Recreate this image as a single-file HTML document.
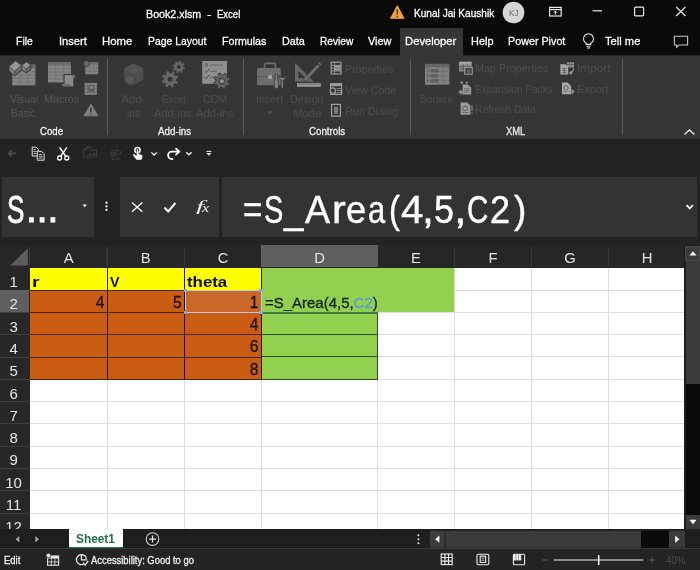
<!DOCTYPE html>
<html><head><meta charset="utf-8"><title>Book2.xlsm - Excel</title>
<style>
*{box-sizing:border-box;margin:0;padding:0}
html,body{width:700px;height:570px;overflow:hidden;background:#232323;font-family:"Liberation Sans",sans-serif}
#app{position:relative;filter:blur(0.3px);width:700px;height:570px;overflow:hidden;background:#232323;color:#fff}
.a{position:absolute}
.t{position:absolute;white-space:nowrap;line-height:1;z-index:3}
svg{position:absolute;overflow:visible}
</style></head><body>
<div id="app">
<!-- title bar -->
<div class="a" style="left:0;top:0;width:700px;height:55px;background:#0a0a0a"></div>
<div class="a" style="left:399.5px;top:28px;width:63.5px;height:27px;background:#363636"></div>
<!-- ribbon -->
<div class="a" style="left:0;top:55px;width:700px;height:83.5px;background:#363636"></div>
<div class="a" style="left:0;top:138.5px;width:700px;height:3px;background:linear-gradient(#1d1d1d,#232323)"></div>
<div class="a" style="left:0;top:54.5px;width:399.5px;height:1px;background:#2a2a2a"></div>
<div class="a" style="left:463px;top:54.5px;width:237px;height:1px;background:#2a2a2a"></div>
<div class="a" style="left:107.2px;top:58.5px;width:1px;height:76px;background:#5c5c5c"></div>
<div class="a" style="left:243px;top:58.5px;width:1px;height:76px;background:#5c5c5c"></div>
<div class="a" style="left:410.3px;top:58.5px;width:1px;height:76px;background:#5c5c5c"></div>
<div class="a" style="left:621.8px;top:58.5px;width:1px;height:76px;background:#5c5c5c"></div>
<svg style="left:0;top:0;z-index:2" width="700" height="570" viewBox="0 0 700 570">
<rect x="12.3" y="64.6" width="23.10" height="20.70" fill="#858585"/>
<rect x="12.3" y="64.6" width="23.10" height="3.4" fill="#666"/>
<path d="M12.3 71.46H35.4 M12.3 74.92H35.4 M12.3 78.38H35.4 M12.3 81.84H35.4 M20.00 68.0V85.3 M27.70 68.0V85.3 " stroke="#6c6c6c" stroke-width="0.7" fill="none"/>
<path d="M8.6 66.6 L15.6 60.2 L22 65.2 L26.6 61.4 L31.2 65.2 L31.2 69.4 L26 73.4 L22 70 L14.6 76.6 L8.6 71z" fill="#363636"/>
<g stroke="#363636" stroke-width="0.35" stroke-linejoin="round">
<path d="M9.2 66.6 L15.6 60.9 L21.4 65.4 L14.6 71.4Z" fill="#949494"/>
<path d="M9.2 66.6 L14.6 71.4 L14.6 75.8 L9.2 70.8Z" fill="#7c7c7c"/>
<path d="M14.6 71.4 L21.4 65.4 L21.4 69.6 L14.6 75.8Z" fill="#6c6c6c"/>
<path d="M21.9 65.4 L26.6 62.0 L30.6 65.3 L26.0 68.9Z" fill="#949494"/>
<path d="M21.9 65.4 L26.0 68.9 L26.0 72.7 L21.9 69.2Z" fill="#808080"/>
<path d="M26.0 68.9 L30.6 65.3 L30.6 69.0 L26.0 72.7Z" fill="#6c6c6c"/>
</g>
<rect x="48" y="62" width="23.00" height="20.40" fill="#858585"/>
<rect x="48" y="62" width="23.00" height="3.4" fill="#6a6a6a"/>
<path d="M48 68.80H71 M48 72.20H71 M48 75.60H71 M48 79.00H71 M55.67 65.4V82.4 M63.33 65.4V82.4 " stroke="#6c6c6c" stroke-width="0.7" fill="none"/>
<path d="M63.6 74.0 h10.4 a2.2 2.2 0 0 1 2.2 2.2 v0.4 a1.6 1.6 0 0 1 -1.6 1.6 h-0.4 v8.9 h-10.6 a2.3 2.3 0 0 1 -2.3 -2.3 v-0.2 a1.5 1.5 0 0 1 1.5 -1.5 h0.8z" fill="#363636"/>
<path d="M64.5 74.9 h9.3 a1.5 1.5 0 0 1 1.5 1.5 v0.2 a0.8 0.8 0 0 1 -0.8 0.8 h-1.2 v8.9 h-9.6 a1.6 1.6 0 0 1 -1.6 -1.6 a0.8 0.8 0 0 1 0.8 -0.8 h1.6z" fill="#8a8a8a"/>
<path d="M62.2 83.9 h8.4 v2.4 h-7 a1.5 1.5 0 0 1 -1.4 -2.4z" fill="#707070"/>
<path d="M72.2 74.9 h1.6 a1.5 1.5 0 0 1 1.5 1.5 v0.2 a0.8 0.8 0 0 1 -0.8 0.8 h-2.3z" fill="#707070"/>
<rect x="85.3" y="62.3" width="12.90" height="12.00" fill="#858585"/>
<rect x="85.3" y="62.3" width="12.90" height="2.6" fill="#707070"/>
<path d="M85.3 68.03H98.2 M85.3 71.17H98.2 M89.60 64.89999999999999V74.3 M93.90 64.89999999999999V74.3 " stroke="#6c6c6c" stroke-width="0.7" fill="none"/>
<circle cx="86.6" cy="63.6" r="2.9" fill="#6e6e6e" stroke="#363636" stroke-width="0.8"/>
<rect x="84.7" y="82.9" width="12.2" height="12" fill="#858585"/>
<path d="M84.7 85.9H96.9 M84.7 88.9H96.9 M84.7 91.9H96.9 M87.75 82.9V94.9 M90.8 82.9V94.9 M93.85 82.9V94.9" stroke="#5e5e5e" stroke-width="0.7"/>
<rect x="88.6" y="85.4" width="5.6" height="6" fill="#5a5a5a"/><circle cx="91.4" cy="87.4" r="1.3" fill="#909090"/>
<path d="M90.9 104.2 L98.0 115.8 L83.8 115.8Z" fill="#808080" stroke="#808080" stroke-width="0.8" stroke-linejoin="round"/>
<path d="M90.9 107.6V112.2 M90.9 113.4V114.6" stroke="#3a3a3a" stroke-width="1.5"/>
<path d="M133.6 63.4 L143.2 68.4 L143.2 80 L133.6 85.1 L124 80 L124 68.4Z" fill="#4e4e4e"/>
<path d="M133.6 63.4 L143.2 68.4 L133.6 73.6 L124 68.4Z" fill="#545454"/>
<path d="M125.2 77.2 L130 74.8 L134.6 77.2 L134.6 82.6 L130 85 L125.2 82.6Z" fill="#585858" stroke="#3e3e3e" stroke-width="0.7"/>
<path d="M175.88 80.49 L177.98 81.92 L176.97 83.99 L174.55 83.21 L173.32 84.30 L173.79 86.80 L171.61 87.54 L170.45 85.28 L168.81 85.18 L167.38 87.28 L165.31 86.27 L166.09 83.85 L165.00 82.62 L162.50 83.09 L161.76 80.91 L164.02 79.75 L164.12 78.11 L162.02 76.68 L163.03 74.61 L165.45 75.39 L166.68 74.30 L166.21 71.80 L168.39 71.06 L169.55 73.32 L171.19 73.42 L172.62 71.32 L174.69 72.33 L173.91 74.75 L175.00 75.98 L177.50 75.51 L178.24 77.69 L175.98 78.85Z M167.50 79.30 a2.5 2.5 0 1 0 5.0 0 a2.5 2.5 0 1 0 -5.0 0Z" fill="#666" fill-rule="evenodd"/>
<path d="M183.30 67.00 L185.06 67.74 L184.62 69.41 L182.73 69.20 L181.98 70.18 L182.70 71.95 L181.21 72.82 L180.02 71.33 L178.80 71.50 L178.06 73.26 L176.39 72.82 L176.60 70.93 L175.62 70.18 L173.85 70.90 L172.98 69.41 L174.47 68.22 L174.30 67.00 L172.54 66.26 L172.98 64.59 L174.87 64.80 L175.62 63.82 L174.90 62.05 L176.39 61.18 L177.58 62.67 L178.80 62.50 L179.54 60.74 L181.21 61.18 L181.00 63.07 L181.98 63.82 L183.75 63.10 L184.62 64.59 L183.13 65.78Z M176.90 67.00 a1.9 1.9 0 1 0 3.8 0 a1.9 1.9 0 1 0 -3.8 0Z" fill="#666" fill-rule="evenodd"/>
<rect x="202.2" y="61" width="24.8" height="22.8" fill="#8e8e8e"/>
<path d="M205.3 66.0 h2.2 v-2.2 h-2.2z" fill="none" stroke="#555" stroke-width="0.8"/>
<path d="M210 65H223 M210 71.3H217 M210 77.3H214" stroke="#666" stroke-width="1"/>
<path d="M204.6 70.8 l1.6 1.8 l3 -3.8 M204.6 76.8 l1.6 1.8 l3 -3.8" fill="none" stroke="#4a4a4a" stroke-width="1"/>
<path d="M227.78 82.39 L229.78 83.79 L228.78 85.84 L226.45 85.11 L225.22 86.20 L225.64 88.61 L223.49 89.35 L222.35 87.18 L220.71 87.08 L219.31 89.08 L217.26 88.08 L217.99 85.75 L216.90 84.52 L214.49 84.94 L213.75 82.79 L215.92 81.65 L216.02 80.01 L214.02 78.61 L215.02 76.56 L217.35 77.29 L218.58 76.20 L218.16 73.79 L220.31 73.05 L221.45 75.22 L223.09 75.32 L224.49 73.32 L226.54 74.32 L225.81 76.65 L226.90 77.88 L229.31 77.46 L230.05 79.61 L227.88 80.75Z M219.30 81.20 a2.6 2.6 0 1 0 5.2 0 a2.6 2.6 0 1 0 -5.2 0Z" fill="#686868" fill-rule="evenodd" stroke="#363636" stroke-width="1"/>
<circle cx="221.9" cy="81.2" r="3.3" fill="none" stroke="#4a4a4a" stroke-width="1.2"/>
<path d="M264.6 68.3 V65 a1.6 1.6 0 0 1 1.6 -1.6 h7.6 a1.6 1.6 0 0 1 1.6 1.6 V68.3" fill="none" stroke="#6e6e6e" stroke-width="1.7"/>
<rect x="257" y="68" width="23.8" height="17.3" rx="1.4" fill="#6e6e6e"/>
<path d="M257 76.6H280.8" stroke="#565656" stroke-width="0.9"/>
<rect x="268.2" y="75.2" width="3.8" height="3.6" fill="#a8a8a8"/>
<g stroke="#363636" stroke-width="0.7">
<path d="M275.2 74.6 h2.2 v6 h0.8 v7.6 h-3.8 v-7.6 h0.8z" fill="#8a8a8a"/>
<path d="M279.6 75.2 a2.6 2.6 0 0 0 1.6 4.6 v8.6 h2 v-8.6 a2.6 2.6 0 0 0 1.6 -4.6 v2.4 h-5.2z" fill="#8a8a8a"/>
</g>
<path d="M267.4 111.2 l2.2 2.4 l2.2 -2.4" fill="none" stroke="#595959" stroke-width="1.1"/>
<path d="M295 62.9 V81.4 H313.6Z M298.4 70.8 V78.2 H305.8Z" fill="#686868" fill-rule="evenodd"/>
<path d="M303.0 79.6 L317.6 64.2 L319.8 66.4 L305.4 81.6Z" fill="#707070" stroke="#363636" stroke-width="0.6"/>
<path d="M318.2 63.4 l1.2 -1.2 l2.2 2.2 l-1.2 1.2z" fill="#707070"/>
<rect x="297" y="82.9" width="23.8" height="3.9" fill="#9a9a9a"/>
<path d="M299.0 82.9v2.2 M301.0 82.9v2.2 M303.0 82.9v2.2 M305.0 82.9v2.2 M307.0 82.9v2.2 M309.0 82.9v2.2 M311.0 82.9v2.2 M313.0 82.9v2.2 M315.0 82.9v2.2 M317.0 82.9v2.2 M319.0 82.9v2.2" stroke="#555" stroke-width="0.7"/>
<rect x="331.2" y="62.2" width="9.8" height="11.8" fill="none" stroke="#9c9c9c" stroke-width="1.2"/>
<path d="M331.2 65.4H341 M331.2 68.2H341 M331.2 71H341 M334.6 62.2V74" stroke="#9c9c9c" stroke-width="0.9"/>
<rect x="335" y="65.8" width="5.6" height="2" fill="#9c9c9c"/><rect x="335" y="68.6" width="5.6" height="2" fill="#9c9c9c"/>
<rect x="330.6" y="83.6" width="11" height="10.8" fill="none" stroke="#9c9c9c" stroke-width="1.2"/>
<rect x="330.6" y="83.6" width="11" height="2.6" fill="#9c9c9c"/>
<path d="M336.6 88.6H341 M336.6 90.6H341 M336.6 92.6H341" stroke="#9c9c9c" stroke-width="0.8"/>
<circle cx="332.8" cy="90.6" r="2.7" fill="#363636" stroke="#9c9c9c" stroke-width="1.1"/><path d="M334.8 92.8 l2 2.2" stroke="#9c9c9c" stroke-width="1.2"/>
<rect x="331.6" y="104.4" width="8.8" height="11.8" fill="none" stroke="#9c9c9c" stroke-width="1.3"/>
<rect x="334" y="106.6" width="4" height="7.4" fill="#6e6e6e"/><path d="M334 109H338 M334 111.4H338" stroke="#9c9c9c" stroke-width="0.7"/>
<rect x="425" y="63.9" width="24.30" height="20.70" fill="#808080"/>
<rect x="425" y="63.9" width="24.30" height="3.4" fill="#666"/>
<path d="M425 71.62H449.3 M425 75.95H449.3 M425 80.27H449.3 M431.07 67.3V84.6 M437.15 67.3V84.6 M443.23 67.3V84.6 " stroke="#6a6a6a" stroke-width="0.7" fill="none"/>
<rect x="425" y="67.3" width="12.6" height="17.3" fill="#808080"/>
<path d="M427.6 67.3V82.4 M427.6 70.8h3 M427.6 75.8h3 M427.6 80.8h3" stroke="#5c5c5c" stroke-width="0.8" fill="none"/>
<rect x="430.4" y="69" width="8.2" height="3.4" rx="1.2" fill="#606060"/><rect x="430.4" y="74" width="8.2" height="3.4" rx="1.2" fill="#606060"/><rect x="430.4" y="79" width="8.2" height="3.4" rx="1.2" fill="#606060"/>
<rect x="459" y="61.8" width="12.6" height="9.6" fill="#8e8e8e"/><rect x="459" y="61.8" width="12.6" height="2.4" fill="#a4a4a4"/>
<path d="M459 66.6H471.6 M459 69H471.6 M463.2 64.2V71.4 M467.4 64.2V71.4" stroke="#4a4a4a" stroke-width="0.7"/>
<rect x="464.8" y="67.4" width="7.4" height="6.8" fill="#363636" stroke="#a0a0a0" stroke-width="1.1"/><path d="M466.6 70h3.8 M466.6 72h3.8" stroke="#a0a0a0" stroke-width="0.8"/>
<path d="M462.6 84.4 h5.4 l3.2 3.2 v6.8 h-8.6z" fill="#9a9a9a"/>
<path d="M464.2 88.6h5.4 M464.2 90.4h5.4 M464.2 92.2h5.4" stroke="#5a5a5a" stroke-width="0.7"/>
<path d="M458.6 92.2h4.6 M460.9 89.9v4.6" stroke="#a6a6a6" stroke-width="1.3"/>
<path d="M460.2 82.6h3 M461.7 81.1v3 M465.6 82.8h2.4 M466.8 81.6v2.4" stroke="#a0a0a0" stroke-width="0.9"/>
<path d="M460.6 102.6 h6.8 l3 3 v9.2 h-9.8z" fill="#9a9a9a"/>
<circle cx="465" cy="108.4" r="2.4" fill="none" stroke="#555" stroke-width="0.9"/><path d="M462.2 112.6h6.4" stroke="#666" stroke-width="0.8"/>
<path d="M472 105.6v5.4 M472 112.2v1.4" stroke="#8a8a8a" stroke-width="1.1"/>
<path d="M560.4 64.2 h5 l2.8 2.8 v7.4 h-7.8z" fill="#a8a8a8"/>
<path d="M562 68.6h4.6 M562 70.6h4.6 M562 72.6h4.6 M564.3 67.4v6" stroke="#555" stroke-width="0.7"/>
<rect x="567" y="62.3" width="7" height="5.2" fill="#9a9a9a"/><path d="M567 64.4h7 M569.3 62.3v5.2 M571.6 62.3v5.2" stroke="#4a4a4a" stroke-width="0.6"/>
<path d="M573.4 68.6 q0.4 3.6 -3.4 4.4 M571.6 71.2 l-1.8 1.9 l2.2 1.2" fill="none" stroke="#9a9a9a" stroke-width="1.2"/>
<path d="M562 82.4 h5.6 l3.4 3.4 v8.4 h-9z" fill="#a8a8a8"/>
<circle cx="566" cy="88" r="2.2" fill="none" stroke="#5a5a5a" stroke-width="0.9"/><path d="M563.4 91.8h4" stroke="#666" stroke-width="0.7"/>
<path d="M567.6 91.6h5.6 M571.4 89.4 l2.4 2.2 l-2.4 2.2" fill="none" stroke="#8e8e8e" stroke-width="1.3"/>
<path d="M684.4 134.6 l5 -4.6 l5 4.6" fill="none" stroke="#e6e6e6" stroke-width="1.3"/>
<path d="M16 153.4H8.6 M11.6 150.4 l-3 3 l3 3" fill="none" stroke="#484848" stroke-width="1.6"/>
<path d="M32.2 147.2 h4 l2 2 v6.8 h-6z" fill="none" stroke="#dedede" stroke-width="1"/>
<path d="M33.4 149.6h2.6 M33.4 151.6h3.2 M33.4 153.6h3.2" stroke="#dedede" stroke-width="0.8"/>
<path d="M37.3 151.4 h4.4 l2.4 2.4 v6.4 h-6.8z" fill="#232323" stroke="#dedede" stroke-width="1"/>
<path d="M38.8 154.4h3 M38.8 156.2h3.8 M38.8 158h3.8" stroke="#dedede" stroke-width="0.8"/>
<path d="M59.6 147.4 L66.0 156.6 M66.9 147.4 L60.4 156.6" stroke="#fff" stroke-width="1.5" fill="none"/>
<circle cx="59.6" cy="158" r="2.0" fill="none" stroke="#fff" stroke-width="1.3"/><circle cx="66.8" cy="158" r="2.0" fill="none" stroke="#fff" stroke-width="1.3"/>
<path d="M83.6 149.4 h2.6 v-2 h4 v2 M83.6 149.4 V157 H96.6 V150.2 H90.2" fill="none" stroke="#3d3d3d" stroke-width="1.1"/>
<path d="M87.6 155.8 l2.6 -2.8 l2 1.8 l2 -2.2 l1.6 1.6 v1.6z" fill="#3d3d3d"/>
<circle cx="137.5" cy="150.2" r="2.6" fill="none" stroke="#fff" stroke-width="1.45"/>
<path d="M136.7 150.0 a0.85 0.85 0 0 1 1.7 0 v3.9 l2.9 0.8 a1.5 1.5 0 0 1 1.1 1.8 l-0.8 3.3 h-5.0 l-3.5 -4.3 a0.9 0.9 0 0 1 1.3 -1.2 l2.3 1.6z" fill="#fff" stroke="#232323" stroke-width="0.7" paint-order="stroke"/>
<path d="M151.4 152.4 l2.7 2.6 l2.7 -2.6" fill="none" stroke="#f0f0f0" stroke-width="1.3"/>
<path d="M172.4 159 h-0.6 a3.7 3.7 0 0 1 0 -7.4 h7.4 M176 148.6 l3.4 3 l-3.4 3" fill="none" stroke="#fff" stroke-width="1.8" stroke-linecap="round" stroke-linejoin="round"/>
<path d="M186.2 152.2 l2.7 2.6 l2.7 -2.6" fill="none" stroke="#f0f0f0" stroke-width="1.3"/>
<path d="M206.5 151.4h4.8" stroke="#e8e8e8" stroke-width="1.1"/><path d="M206.3 153 h5.2 l-2.6 2.7z" fill="#e8e8e8"/>
<path d="M82.4 204.6 h4.6 l-2.3 2.6z" fill="#f0f0f0"/>
<circle cx="106.5" cy="202.7" r="1.15" fill="#f4f4f4"/><circle cx="106.5" cy="206.3" r="1.15" fill="#f4f4f4"/><circle cx="106.5" cy="209.9" r="1.15" fill="#f4f4f4"/>
<path d="M132 202.6 L142.4 211.8 M142.4 202.6 L132 211.8" stroke="#f4f4f4" stroke-width="1.4" fill="none"/>
<path d="M164.4 207.6 L168.2 211.4 L175.4 203.0" stroke="#f4f4f4" stroke-width="2.1" fill="none"/>
<path d="M686.6 205.2 l3.1 3.1 l3.1 -3.1" fill="none" stroke="#f4f4f4" stroke-width="1.9"/>
<path d="M397.3 6.0 L403.8 18.2 H390.8Z" fill="#f0a23c" stroke="#f0a23c" stroke-width="1.2" stroke-linejoin="round"/>
<path d="M397.3 9.6V14.6 M397.3 15.8V17.2" stroke="#3a2a10" stroke-width="1.4"/>
<circle cx="513.5" cy="12.5" r="10.8" fill="#d6d6d6"/>
<rect x="549.6" y="7.4" width="11.6" height="8.6" fill="none" stroke="#e8e8e8" stroke-width="1.2"/>
<path d="M549.6 9.6H561.2" stroke="#e8e8e8" stroke-width="1.2"/>
<path d="M555.4 14.6V11.2 M553.6 12.8 l1.8 -1.8 l1.8 1.8" fill="none" stroke="#e8e8e8" stroke-width="1"/>
<path d="M592.6 10.8H602" stroke="#e8e8e8" stroke-width="1.2"/>
<rect x="634.6" y="7.2" width="9" height="8.6" rx="1" fill="none" stroke="#e8e8e8" stroke-width="1.2"/>
<path d="M676.2 7 L685.4 16 M685.4 7 L676.2 16" stroke="#e8e8e8" stroke-width="1.2"/>
<path d="M586.2 44.4 v-1.2 a5 5 0 1 1 4.6 0 v1.2z" fill="none" stroke="#e8e8e8" stroke-width="1.1"/>
<path d="M586.4 46.2h4.2 M587 48h3" stroke="#e8e8e8" stroke-width="1"/>
<path d="M674.4 36.2 H687.6 V45 H679 L676.6 47.2 V45 H674.4Z" fill="none" stroke="#c4c4c4" stroke-width="1.1"/>
</svg>
<!-- formula bar -->
<div class="a" style="left:1.7px;top:176.8px;width:92.2px;height:59.8px;background:#333333"></div>
<div class="a" style="left:120px;top:176.8px;width:99px;height:59.8px;background:#333333"></div>
<div class="a" style="left:221.6px;top:176.8px;width:475.6px;height:59.8px;background:#333333"></div>
<!-- grid -->
<div id="grid" class="a" style="left:0;top:245.3px;width:684px;height:284px;overflow:hidden">
  <div class="a" style="left:29.5px;top:22.5px;width:655px;height:262px;background:#fff"></div>
  <div class="a" style="left:0.00px;top:0.00px;width:684.00px;height:22.50px;background:#262626;"></div>
<div class="a" style="left:0.00px;top:22.50px;width:29.80px;height:261.70px;background:#272727;"></div>
<div class="a" style="left:28.60px;top:1.50px;width:1.20px;height:20.40px;background:#383838;"></div>
<div class="a" style="left:106.40px;top:1.50px;width:1.20px;height:20.40px;background:#383838;"></div>
<div class="a" style="left:183.70px;top:1.50px;width:1.20px;height:20.40px;background:#383838;"></div>
<div class="a" style="left:260.70px;top:1.50px;width:1.20px;height:20.40px;background:#383838;"></div>
<div class="a" style="left:376.70px;top:1.50px;width:1.20px;height:20.40px;background:#383838;"></div>
<div class="a" style="left:453.70px;top:1.50px;width:1.20px;height:20.40px;background:#383838;"></div>
<div class="a" style="left:530.70px;top:1.50px;width:1.20px;height:20.40px;background:#383838;"></div>
<div class="a" style="left:607.70px;top:1.50px;width:1.20px;height:20.40px;background:#383838;"></div>
<div class="a" style="left:0.00px;top:44.40px;width:29.50px;height:1.00px;background:#3e3e3e;"></div>
<div class="a" style="left:0.00px;top:66.70px;width:29.50px;height:1.00px;background:#3e3e3e;"></div>
<div class="a" style="left:0.00px;top:89.00px;width:29.50px;height:1.00px;background:#3e3e3e;"></div>
<div class="a" style="left:0.00px;top:111.30px;width:29.50px;height:1.00px;background:#3e3e3e;"></div>
<div class="a" style="left:0.00px;top:133.60px;width:29.50px;height:1.00px;background:#3e3e3e;"></div>
<div class="a" style="left:0.00px;top:155.90px;width:29.50px;height:1.00px;background:#3e3e3e;"></div>
<div class="a" style="left:0.00px;top:178.20px;width:29.50px;height:1.00px;background:#3e3e3e;"></div>
<div class="a" style="left:0.00px;top:200.50px;width:29.50px;height:1.00px;background:#3e3e3e;"></div>
<div class="a" style="left:0.00px;top:222.80px;width:29.50px;height:1.00px;background:#3e3e3e;"></div>
<div class="a" style="left:0.00px;top:245.10px;width:29.50px;height:1.00px;background:#3e3e3e;"></div>
<div class="a" style="left:0.00px;top:267.40px;width:29.50px;height:1.00px;background:#3e3e3e;"></div>
<div class="a" style="left:0.00px;top:289.70px;width:29.50px;height:1.00px;background:#3e3e3e;"></div>
<div class="a" style="left:261.20px;top:0.00px;width:116.60px;height:21.70px;background:#5f5f5f;"></div>
<div class="a" style="left:0.00px;top:45.10px;width:29.00px;height:21.60px;background:#5f5f5f;"></div>
<svg style="left:0;top:0" width="30" height="23"><path d="M10.2 20.5 L27.8 20.5 L27.8 3.3Z" fill="#5c5c5c"/></svg>
<div class="a" style="left:106.80px;top:22.50px;width:1.00px;height:261.70px;background:#dcdcdc;"></div>
<div class="a" style="left:184.10px;top:22.50px;width:1.00px;height:261.70px;background:#dcdcdc;"></div>
<div class="a" style="left:261.10px;top:22.50px;width:1.00px;height:261.70px;background:#dcdcdc;"></div>
<div class="a" style="left:377.10px;top:22.50px;width:1.00px;height:261.70px;background:#dcdcdc;"></div>
<div class="a" style="left:454.10px;top:22.50px;width:1.00px;height:261.70px;background:#dcdcdc;"></div>
<div class="a" style="left:531.10px;top:22.50px;width:1.00px;height:261.70px;background:#dcdcdc;"></div>
<div class="a" style="left:608.10px;top:22.50px;width:1.00px;height:261.70px;background:#dcdcdc;"></div>
<div class="a" style="left:29.50px;top:44.30px;width:654.50px;height:1.00px;background:#dcdcdc;"></div>
<div class="a" style="left:29.50px;top:66.60px;width:654.50px;height:1.00px;background:#dcdcdc;"></div>
<div class="a" style="left:29.50px;top:88.90px;width:654.50px;height:1.00px;background:#dcdcdc;"></div>
<div class="a" style="left:29.50px;top:111.20px;width:654.50px;height:1.00px;background:#dcdcdc;"></div>
<div class="a" style="left:29.50px;top:133.50px;width:654.50px;height:1.00px;background:#dcdcdc;"></div>
<div class="a" style="left:29.50px;top:155.80px;width:654.50px;height:1.00px;background:#dcdcdc;"></div>
<div class="a" style="left:29.50px;top:178.10px;width:654.50px;height:1.00px;background:#dcdcdc;"></div>
<div class="a" style="left:29.50px;top:200.40px;width:654.50px;height:1.00px;background:#dcdcdc;"></div>
<div class="a" style="left:29.50px;top:222.70px;width:654.50px;height:1.00px;background:#dcdcdc;"></div>
<div class="a" style="left:29.50px;top:245.00px;width:654.50px;height:1.00px;background:#dcdcdc;"></div>
<div class="a" style="left:29.50px;top:267.30px;width:654.50px;height:1.00px;background:#dcdcdc;"></div>
<div class="a" style="left:29.50px;top:289.60px;width:654.50px;height:1.00px;background:#dcdcdc;"></div>
<div class="a" style="left:29.50px;top:22.50px;width:232.10px;height:22.30px;background:#ffff00;"></div>
<div class="a" style="left:29.50px;top:44.80px;width:232.10px;height:89.20px;background:#cb5c13;"></div>
<div class="a" style="left:261.60px;top:22.50px;width:192.80px;height:44.60px;background:#92d050;"></div>
<div class="a" style="left:261.60px;top:67.10px;width:116.00px;height:66.90px;background:#92d050;"></div>
<div class="a" style="left:106.75px;top:22.50px;width:1.10px;height:111.50px;background:#1c1206;"></div>
<div class="a" style="left:184.05px;top:22.50px;width:1.10px;height:111.50px;background:#1c1206;"></div>
<div class="a" style="left:261.05px;top:22.50px;width:1.10px;height:111.50px;background:#1c1206;"></div>
<div class="a" style="left:29.50px;top:44.50px;width:232.10px;height:1.10px;background:#4a250a;"></div>
<div class="a" style="left:29.50px;top:66.80px;width:232.10px;height:1.10px;background:#4a250a;"></div>
<div class="a" style="left:29.50px;top:89.10px;width:232.10px;height:1.10px;background:#4a250a;"></div>
<div class="a" style="left:29.50px;top:111.40px;width:232.10px;height:1.10px;background:#4a250a;"></div>
<div class="a" style="left:29.50px;top:133.70px;width:232.10px;height:1.10px;background:#4a250a;"></div>
<div class="a" style="left:261.60px;top:88.90px;width:116.50px;height:1.00px;background:#2d4a18;"></div>
<div class="a" style="left:261.60px;top:111.20px;width:116.50px;height:1.00px;background:#2d4a18;"></div>
<div class="a" style="left:261.60px;top:133.50px;width:116.50px;height:1.00px;background:#2d4a18;"></div>
<div class="a" style="left:377.10px;top:67.10px;width:1.00px;height:67.40px;background:#2d4a18;"></div>
<div class="a" style="left:261.60px;top:67.00px;width:116.40px;height:1.40px;background:#3c7a3c;"></div>
<div class="a" style="left:185.60px;top:45.60px;width:75.20px;height:21.30px;background:rgba(200,135,105,0.28);"></div>
<div class="a" style="left:185.00px;top:45.10px;width:76.50px;height:22.90px;background:transparent;border:1.3px solid #c0c8e0;"></div>
<div class="a" style="left:183.80px;top:44.00px;width:3.20px;height:3.20px;background:#8fa6d4;"></div>
<div class="a" style="left:259.40px;top:44.00px;width:3.20px;height:3.20px;background:#8fa6d4;"></div>
<div class="a" style="left:183.80px;top:65.80px;width:3.20px;height:3.20px;background:#8fa6d4;"></div>
<div class="a" style="left:259.40px;top:65.80px;width:3.20px;height:3.20px;background:#8fa6d4;"></div>
</div>
<!-- vertical scrollbar -->
<div class="a" style="left:684px;top:245px;width:16px;height:284px;background:#1c1c1c"></div>
<div class="a" style="left:685.2px;top:246.2px;width:14.8px;height:14.4px;background:#3b3b3b;border:1px solid #484848"></div>
<div class="a" style="left:685.5px;top:261px;width:14.5px;height:122.6px;background:#3b3b3b"></div>
<div class="a" style="left:685.5px;top:383.6px;width:14.5px;height:131px;background:#0a0a0a"></div>
<div class="a" style="left:685.5px;top:515px;width:14.5px;height:14px;background:#3b3b3b"></div>
<svg style="left:685.5px;top:247px" width="14.5" height="13.3"><path d="M3.4 8.6 L7 4.3 L10.6 8.6Z" fill="#fff"/></svg>
<svg style="left:685.5px;top:515px" width="14.5" height="14"><path d="M3.4 4.8 L10.6 4.8 L7 9.2Z" fill="#fff"/></svg>
<!-- bottom bars -->
<div class="a" style="left:0;top:529.2px;width:700px;height:19.6px;background:#1e1e1e;z-index:1"></div>
<div class="a" style="left:0;top:548.8px;width:700px;height:21.2px;background:#242424;z-index:1"></div>
<div class="a" style="left:0;top:548.3px;width:700px;height:1px;background:#3a3a3a;z-index:1"></div>
<div class="a" style="left:68.8px;top:529.2px;width:53.8px;height:18px;background:#fff;z-index:1"></div>
<div class="a" style="left:68.8px;top:546.6px;width:53.8px;height:1.6px;background:#1e7145;z-index:2"></div>
<svg style="left:0;top:0;z-index:2" width="700" height="570" viewBox="0 0 700 570">
<path d="M19.3 536 V542.4 L15.7 539.2Z" fill="#a6a6a6"/>
<path d="M35.4 536 V542.4 L39 539.2Z" fill="#a6a6a6"/>
<circle cx="152.5" cy="539.1" r="6.3" fill="none" stroke="#cfcfcf" stroke-width="1.1"/>
<path d="M149 539.1H156 M152.5 535.6V542.6" stroke="#e6e6e6" stroke-width="1.2"/>
<!-- macro record icon -->
<rect x="47.6" y="556" width="11" height="9.2" fill="none" stroke="#e6e6e6" stroke-width="1.1"/>
<rect x="47.6" y="556" width="11" height="2.6" fill="#e6e6e6"/>
<path d="M47.6 561.9H58.6 M51.3 558.6V565.2 M54.9 558.6V565.2" stroke="#e6e6e6" stroke-width="0.8"/>
<circle cx="48.4" cy="555.6" r="2.4" fill="#e6e6e6" stroke="#242424" stroke-width="0.8"/>
<!-- accessibility icon -->
<path d="M81.4 554.6 a5 5 0 1 0 2.4 9.4" fill="none" stroke="#f0f0f0" stroke-width="1.2"/>
<path d="M81.4 554.4 v5.4 h5.8" fill="none" stroke="#f0f0f0" stroke-width="1.2"/>
<path d="M81.4 554.6 a5 5 0 0 1 5 4.2" fill="none" stroke="#f0f0f0" stroke-width="1.2"/>
<path d="M83 562.6 l2.2 2.6 l3 -4.4" fill="none" stroke="#f0f0f0" stroke-width="1.3"/>
<!-- 3 dots + h scrollbar -->
<circle cx="418.4" cy="535.3" r="0.95" fill="#eee"/><circle cx="418.4" cy="539.3" r="0.95" fill="#eee"/><circle cx="418.4" cy="543.3" r="0.95" fill="#eee"/>
<rect x="430" y="530.8" width="14.6" height="16.8" fill="#3b3b3b"/>
<rect x="445.4" y="530.8" width="195.6" height="16.8" fill="#3b3b3b"/>
<rect x="641" y="530.8" width="28" height="16.8" fill="#0a0a0a"/>
<rect x="669" y="530.8" width="16" height="16.8" fill="#3b3b3b"/>
<path d="M439.4 535.6 V542.8 L435.2 539.2Z" fill="#fff"/>
<path d="M675.2 535.6 V542.8 L679.4 539.2Z" fill="#fff"/>
<!-- view buttons -->
<g fill="none" stroke="#ececec" stroke-width="1.1">
<rect x="441.2" y="554" width="11" height="10.6"/><path d="M441.2 557.5H452.2 M441.2 561.1H452.2 M444.9 554V564.6 M448.5 554V564.6"/>
<rect x="477" y="554.2" width="11.8" height="10.6" rx="1.2"/><rect x="480.2" y="556.2" width="5.4" height="6.2"/><path d="M481.6 558.2h2.6 M481.6 560.2h2.6" stroke-width="0.8"/>
<rect x="513.4" y="554.2" width="11.2" height="10.6" rx="1"/>
</g>
<rect x="513.2" y="554" width="8" height="6.4" fill="#f4f4f4"/><path d="M515.9 554v6 M518.5 554v6" stroke="#555" stroke-width="0.6"/>
<!-- zoom slider -->
<path d="M541.6 560h6.4" stroke="#585858" stroke-width="1.1"/>
<path d="M553.6 560H643.4" stroke="#f0f0f0" stroke-width="1.2"/>
<rect x="597.9" y="555.2" width="1.6" height="9.8" fill="#f0f0f0"/>
<path d="M648.6 560h6.4 M651.8 556.8v6.4" stroke="#585858" stroke-width="1.1"/>
</svg>

<span class="t" style="top:8.59px;font-size:11px;color:#fff;left:145.78px;transform-origin:0 0;transform:scaleX(0.9720);-webkit-text-stroke-width:0.28px;">Book2.xlsm</span>
<span class="t" style="top:8.59px;font-size:11px;color:#fff;left:207.28px;transform-origin:0 0;transform:scaleX(1.2160);-webkit-text-stroke-width:0.28px;">-</span>
<span class="t" style="top:8.59px;font-size:11px;color:#fff;left:217.28px;transform-origin:0 0;transform:scaleX(0.8647);-webkit-text-stroke-width:0.28px;">Excel</span>
<span class="t" style="top:8.39px;font-size:11px;color:#fff;left:414.29px;transform-origin:0 0;transform:scaleX(0.9178);-webkit-text-stroke-width:0.28px;">Kunal Jai Kaushik</span>
<span class="t" style="top:8.80px;font-size:8.5px;color:#6a6a6a;left:508.95px;transform-origin:0 0;transform:scaleX(0.9552);">KJ</span>
<span class="t" style="top:35.91px;font-size:11.8px;color:#fff;left:15.73px;transform-origin:0 0;transform:scaleX(0.8865);-webkit-text-stroke-width:0.28px;">File</span>
<span class="t" style="top:35.91px;font-size:11.8px;color:#fff;left:58.73px;transform-origin:0 0;transform:scaleX(0.9438);-webkit-text-stroke-width:0.28px;">Insert</span>
<span class="t" style="top:35.91px;font-size:11.8px;color:#fff;left:102.23px;transform-origin:0 0;transform:scaleX(0.9647);-webkit-text-stroke-width:0.28px;">Home</span>
<span class="t" style="top:35.91px;font-size:11.8px;color:#fff;left:147.98px;transform-origin:0 0;transform:scaleX(0.8809);-webkit-text-stroke-width:0.28px;">Page Layout</span>
<span class="t" style="top:35.91px;font-size:11.8px;color:#fff;left:222.23px;transform-origin:0 0;transform:scaleX(0.9021);-webkit-text-stroke-width:0.28px;">Formulas</span>
<span class="t" style="top:35.91px;font-size:11.8px;color:#fff;left:281.73px;transform-origin:0 0;transform:scaleX(0.9171);-webkit-text-stroke-width:0.28px;">Data</span>
<span class="t" style="top:35.91px;font-size:11.8px;color:#fff;left:319.73px;transform-origin:0 0;transform:scaleX(0.8622);-webkit-text-stroke-width:0.28px;">Review</span>
<span class="t" style="top:35.91px;font-size:11.8px;color:#fff;left:367.98px;transform-origin:0 0;transform:scaleX(0.9210);-webkit-text-stroke-width:0.28px;">View</span>
<span class="t" style="top:35.91px;font-size:11.8px;color:#fff;left:405.23px;transform-origin:0 0;transform:scaleX(0.9549);-webkit-text-stroke-width:0.28px;">Developer</span>
<span class="t" style="top:35.91px;font-size:11.8px;color:#fff;left:470.83px;transform-origin:0 0;transform:scaleX(0.9255);-webkit-text-stroke-width:0.28px;">Help</span>
<span class="t" style="top:35.91px;font-size:11.8px;color:#fff;left:508.23px;transform-origin:0 0;transform:scaleX(0.9111);-webkit-text-stroke-width:0.28px;">Power Pivot</span>
<span class="t" style="top:35.91px;font-size:11.8px;color:#fff;left:605.23px;transform-origin:0 0;transform:scaleX(0.9460);-webkit-text-stroke-width:0.28px;">Tell me</span>
<span class="t" style="top:93.63px;font-size:11.3px;color:#585858;left:9.57px;transform-origin:0 0;transform:scaleX(0.9157);">Visual</span>
<span class="t" style="top:107.63px;font-size:11.3px;color:#585858;left:11.27px;transform-origin:0 0;transform:scaleX(0.8796);">Basic</span>
<span class="t" style="top:93.63px;font-size:11.3px;color:#585858;left:43.87px;transform-origin:0 0;transform:scaleX(0.9501);">Macros</span>
<span class="t" style="top:93.63px;font-size:11.3px;color:#4e4e4e;left:121.27px;transform-origin:0 0;transform:scaleX(1.0345);">Add-</span>
<span class="t" style="top:107.63px;font-size:11.3px;color:#4e4e4e;left:127.27px;transform-origin:0 0;transform:scaleX(0.9202);">ins</span>
<span class="t" style="top:93.63px;font-size:11.3px;color:#4e4e4e;left:161.77px;transform-origin:0 0;transform:scaleX(0.8507);">Excel</span>
<span class="t" style="top:107.63px;font-size:11.3px;color:#4e4e4e;left:153.97px;transform-origin:0 0;transform:scaleX(0.9814);">Add-ins</span>
<span class="t" style="top:93.63px;font-size:11.3px;color:#4e4e4e;left:203.27px;transform-origin:0 0;transform:scaleX(0.9219);">COM</span>
<span class="t" style="top:107.63px;font-size:11.3px;color:#4e4e4e;left:196.27px;transform-origin:0 0;transform:scaleX(0.9944);">Add-ins</span>
<span class="t" style="top:93.83px;font-size:11.3px;color:#4e4e4e;left:256.27px;transform-origin:0 0;transform:scaleX(0.9658);">Insert</span>
<span class="t" style="top:93.83px;font-size:11.3px;color:#4e4e4e;left:290.27px;transform-origin:0 0;transform:scaleX(0.9468);">Design</span>
<span class="t" style="top:107.63px;font-size:11.3px;color:#4e4e4e;left:293.02px;transform-origin:0 0;transform:scaleX(1.0100);">Mode</span>
<span class="t" style="top:63.83px;font-size:11.3px;color:#4e4e4e;left:345.27px;transform-origin:0 0;transform:scaleX(0.9379);">Properties</span>
<span class="t" style="top:85.33px;font-size:11.3px;color:#4e4e4e;left:345.27px;transform-origin:0 0;transform:scaleX(0.9424);">View Code</span>
<span class="t" style="top:106.33px;font-size:11.3px;color:#4e4e4e;left:345.27px;transform-origin:0 0;transform:scaleX(0.9536);">Run Dialog</span>
<span class="t" style="top:93.83px;font-size:11.3px;color:#4e4e4e;left:420.27px;transform-origin:0 0;transform:scaleX(0.9302);">Source</span>
<span class="t" style="top:63.33px;font-size:11.3px;color:#4e4e4e;left:474.77px;transform-origin:0 0;transform:scaleX(0.9568);">Map Properties</span>
<span class="t" style="top:83.83px;font-size:11.3px;color:#4e4e4e;left:474.77px;transform-origin:0 0;transform:scaleX(0.8976);">Expansion Packs</span>
<span class="t" style="top:103.83px;font-size:11.3px;color:#4e4e4e;left:474.77px;transform-origin:0 0;transform:scaleX(0.9134);">Refresh Data</span>
<span class="t" style="top:63.33px;font-size:11.3px;color:#4e4e4e;left:577.07px;transform-origin:0 0;transform:scaleX(1.0463);">Import</span>
<span class="t" style="top:83.83px;font-size:11.3px;color:#4e4e4e;left:577.07px;transform-origin:0 0;transform:scaleX(0.9646);">Export</span>
<span class="t" style="top:126.23px;font-size:10.6px;color:#efefef;left:40.11px;transform-origin:0 0;transform:scaleX(0.9088);-webkit-text-stroke-width:0.28px;">Code</span>
<span class="t" style="top:126.23px;font-size:10.6px;color:#efefef;left:158.31px;transform-origin:0 0;transform:scaleX(0.9248);-webkit-text-stroke-width:0.28px;">Add-ins</span>
<span class="t" style="top:126.23px;font-size:10.6px;color:#efefef;left:308.81px;transform-origin:0 0;transform:scaleX(0.9180);-webkit-text-stroke-width:0.28px;">Controls</span>
<span class="t" style="top:126.23px;font-size:10.6px;color:#efefef;left:506.31px;transform-origin:0 0;transform:scaleX(0.8817);-webkit-text-stroke-width:0.28px;">XML</span>
<span class="t" style="top:189.68px;font-size:39.6px;color:#ffffff;left:7.00px;transform-origin:0 0;transform:scaleX(0.6589);-webkit-text-stroke:0.9px #fff;">S</span><span class="t" style="top:189.48px;font-size:39.6px;color:#ffffff;left:26.10px;transform-origin:0 0;transform:scaleX(0.9758);-webkit-text-stroke:1.1px #fff;">...</span>
<span class="t" style="top:250.77px;font-size:14.8px;color:#e4e4e4;left:63.66px;transform-origin:0 0;">A</span>
<span class="t" style="top:250.77px;font-size:14.8px;color:#e4e4e4;left:140.81px;transform-origin:0 0;">B</span>
<span class="t" style="top:250.77px;font-size:14.8px;color:#e4e4e4;left:217.66px;transform-origin:0 0;">C</span>
<span class="t" style="top:250.77px;font-size:14.8px;color:#e4e4e4;left:314.16px;transform-origin:0 0;">D</span>
<span class="t" style="top:250.77px;font-size:14.8px;color:#e4e4e4;left:411.06px;transform-origin:0 0;">E</span>
<span class="t" style="top:250.77px;font-size:14.8px;color:#e4e4e4;left:488.48px;transform-origin:0 0;">F</span>
<span class="t" style="top:250.77px;font-size:14.8px;color:#e4e4e4;left:564.24px;transform-origin:0 0;">G</span>
<span class="t" style="top:250.77px;font-size:14.8px;color:#e4e4e4;left:641.66px;transform-origin:0 0;">H</span>
<span class="t" style="top:274.00px;font-size:15.0px;color:#e4e4e4;left:9.43px;transform-origin:0 0;">1</span>
<span class="t" style="top:296.30px;font-size:15.0px;color:#e4e4e4;left:9.43px;transform-origin:0 0;">2</span>
<span class="t" style="top:318.60px;font-size:15.0px;color:#e4e4e4;left:9.43px;transform-origin:0 0;">3</span>
<span class="t" style="top:340.90px;font-size:15.0px;color:#e4e4e4;left:9.43px;transform-origin:0 0;">4</span>
<span class="t" style="top:363.20px;font-size:15.0px;color:#e4e4e4;left:9.43px;transform-origin:0 0;">5</span>
<span class="t" style="top:385.50px;font-size:15.0px;color:#e4e4e4;left:9.43px;transform-origin:0 0;">6</span>
<span class="t" style="top:407.80px;font-size:15.0px;color:#e4e4e4;left:9.43px;transform-origin:0 0;">7</span>
<span class="t" style="top:430.10px;font-size:15.0px;color:#e4e4e4;left:9.43px;transform-origin:0 0;">8</span>
<span class="t" style="top:452.40px;font-size:15.0px;color:#e4e4e4;left:9.43px;transform-origin:0 0;">9</span>
<span class="t" style="top:474.70px;font-size:15.0px;color:#e4e4e4;left:5.26px;transform-origin:0 0;">10</span>
<span class="t" style="top:497.00px;font-size:15.0px;color:#e4e4e4;left:5.81px;transform-origin:0 0;">11</span>
<span class="t" style="top:519.30px;font-size:15.0px;color:#e4e4e4;left:5.26px;transform-origin:0 0;z-index:0;">12</span>
<span class="t" style="top:273.50px;font-size:15px;color:#0c0c0c;font-weight:700;left:31.82px;transform-origin:0 0;transform:scaleX(1.2877);">r</span>
<span class="t" style="top:273.50px;font-size:15px;color:#0c0c0c;font-weight:700;left:110.03px;transform-origin:0 0;transform:scaleX(0.9510);">V</span>
<span class="t" style="top:273.50px;font-size:15px;color:#0c0c0c;font-weight:700;left:186.53px;transform-origin:0 0;transform:scaleX(1.1222);">theta</span>
<span class="t" style="top:294.81px;font-size:15.7px;color:#1b1008;left:95.77px;transform-origin:0 0;-webkit-text-stroke-width:0.3px;">4</span>
<span class="t" style="top:294.81px;font-size:15.7px;color:#1b1008;left:172.97px;transform-origin:0 0;-webkit-text-stroke-width:0.3px;">5</span>
<span class="t" style="top:294.81px;font-size:15.7px;color:#1b1008;left:249.77px;transform-origin:0 0;-webkit-text-stroke-width:0.3px;">1</span>
<span class="t" style="top:317.11px;font-size:15.7px;color:#1b1008;left:249.77px;transform-origin:0 0;-webkit-text-stroke-width:0.3px;">4</span>
<span class="t" style="top:339.41px;font-size:15.7px;color:#1b1008;left:249.77px;transform-origin:0 0;-webkit-text-stroke-width:0.3px;">6</span>
<span class="t" style="top:361.71px;font-size:15.7px;color:#1b1008;left:249.77px;transform-origin:0 0;-webkit-text-stroke-width:0.3px;">8</span>
<span class="t" style="top:295.23px;font-size:15.2px;color:#10200a;left:264.61px;transform-origin:0 0;transform:scaleX(0.9855);-webkit-text-stroke-width:0.3px;">=S_Area(4,5,<span style="color:#5b9bd5">C2</span>)</span>
<span class="t" style="top:532.52px;font-size:12.5px;color:#1e7145;font-weight:700;left:75.69px;transform-origin:0 0;transform:scaleX(0.9497);">Sheet1</span>
<span class="t" style="top:556.13px;font-size:10px;color:#f0f0f0;left:3.75px;transform-origin:0 0;transform:scaleX(0.9429);-webkit-text-stroke-width:0.28px;">Edit</span>
<span class="t" style="top:556.13px;font-size:10px;color:#f0f0f0;left:90.65px;transform-origin:0 0;transform:scaleX(0.9393);-webkit-text-stroke-width:0.28px;">Accessibility: Good to go</span>
<span class="t" style="top:555.83px;font-size:10px;color:#4c4c4c;left:666.35px;transform-origin:0 0;transform:scaleX(0.9568);">40%</span>
<span class="t" style="top:147.72px;font-size:8.6px;color:#424242;left:110.24px;transform-origin:0 0;transform:scaleX(1.1910);">ab</span><span class="t" style="top:153.20px;font-size:8.5px;color:#424242;left:110.65px;transform-origin:0 0;transform:scaleX(1.1712);">c</span><span class="t" style="top:155.72px;font-size:6px;color:#424242;left:116.01px;transform-origin:0 0;transform:scaleX(1.0912);font-family:'DejaVu Sans',sans-serif;">↵</span>
<span class="t" style="top:197.83px;font-size:15.2px;color:#f2f2f2;left:195.81px;transform-origin:0 0;transform:scaleX(1.9243);font-family:'Liberation Serif',serif;font-style:italic;">f</span><span class="t" style="top:202.87px;font-size:11.5px;color:#f2f2f2;left:201.85px;transform-origin:0 0;transform:scaleX(1.3940);font-family:'Liberation Serif',serif;font-style:italic;">x</span>
<span class="t" style="left:0;top:189.68px;font-size:39.6px;color:#ffffff;-webkit-text-stroke:0.45px #fff;"><span style="position:absolute;left:242.86px;top:0;transform-origin:0 0;transform:scaleX(0.8381)">=</span><span style="position:absolute;left:263.57px;top:0;transform-origin:0 0;transform:scaleX(0.7333)">S</span><span style="position:absolute;left:284.38px;top:0;transform-origin:0 0;transform:scaleX(0.8833)">_</span><span style="position:absolute;left:305.40px;top:0;transform-origin:0 0;transform:scaleX(0.9481)">A</span><span style="position:absolute;left:332.31px;top:0;transform-origin:0 0;transform:scaleX(1.0455)">r</span><span style="position:absolute;left:346.08px;top:0;transform-origin:0 0;transform:scaleX(0.9150)">e</span><span style="position:absolute;left:367.92px;top:0;transform-origin:0 0;transform:scaleX(0.7818)">a</span><span style="position:absolute;left:388.65px;top:0;transform-origin:0 0;transform:scaleX(0.8273)">(</span><span style="position:absolute;left:401.00px;top:0;transform-origin:0 0;transform:scaleX(1.0143)">4</span><span style="position:absolute;left:422.06px;top:0;transform-origin:0 0;transform:scaleX(1.0800)">,</span><span style="position:absolute;left:433.99px;top:0;transform-origin:0 0;transform:scaleX(0.9100)">5</span><span style="position:absolute;left:454.28px;top:0;transform-origin:0 0;transform:scaleX(1.1400)">,</span><span style="position:absolute;left:466.51px;top:0;transform-origin:0 0;transform:scaleX(0.7462)">C</span><span style="position:absolute;left:489.99px;top:0;transform-origin:0 0;transform:scaleX(0.9100)">2</span><span style="position:absolute;left:513.70px;top:0;transform-origin:0 0;transform:scaleX(0.9364)">)</span></span>

</div>
</body></html>
